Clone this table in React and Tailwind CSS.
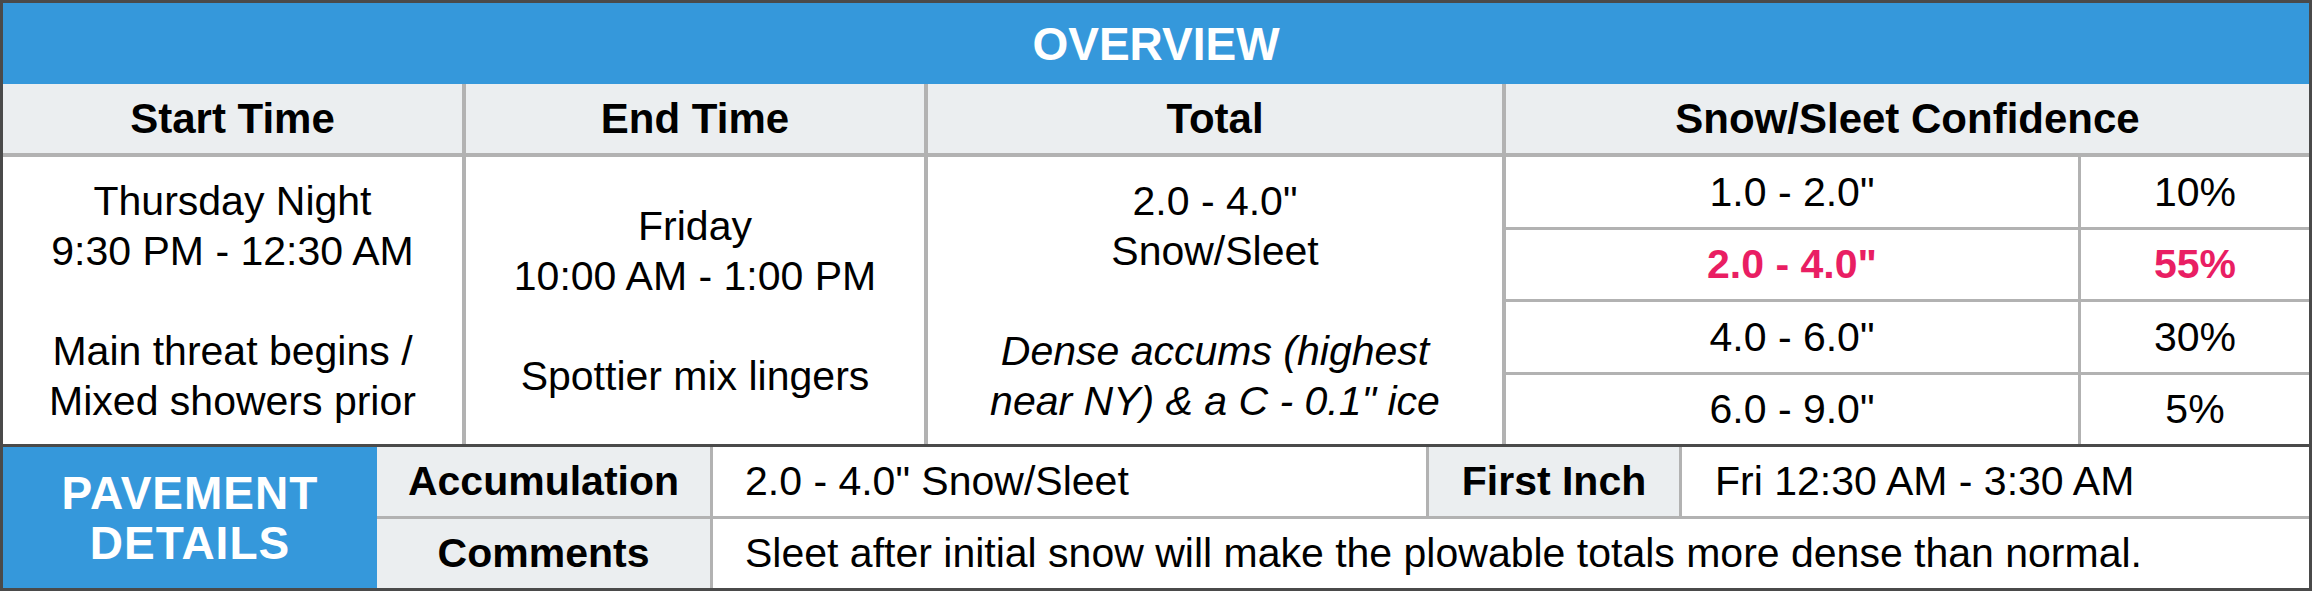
const confidence = [
  { range: '1.0 - 2.0"', pct: "10%" },
  { range: '2.0 - 4.0"', pct: "55%", likely: true },
  { range: '4.0 - 6.0"', pct: "30%" },
  { range: '6.0 - 9.0"', pct: "5%" },
];

const headers = ["Start Time", "End Time", "Total", "Snow/Sleet Confidence"];

export default function App() {
  return (
    <div className="w-[2312px] h-[591px] bg-white border-[3px] border-[#4a4a4a] flex flex-col font-['Liberation_Sans',Arial,sans-serif] text-black text-[41px]">
      {/* overview banner */}
      <div className="h-[81px] shrink-0 bg-[#3598db] flex items-center justify-center">
        <h1 className="text-white font-bold text-[46px] leading-none">OVERVIEW</h1>
      </div>

      {/* column headers */}
      <div className="h-[73px] shrink-0 grid grid-cols-[463px_462px_578px_1fr] bg-[#ebeef0] border-b-4 border-[#b2b2b2] text-[42px]">
        {headers.map((h, i) => (
          <div
            key={h}
            className={`flex items-center justify-center font-bold ${i < 3 ? "border-r-4 border-[#b2b2b2]" : ""}`}
          >
            {h}
          </div>
        ))}
      </div>

      {/* body */}
      <div className="h-[287px] shrink-0 grid grid-cols-[463px_462px_578px_1fr] leading-[50px]">
        <div className="flex items-center justify-center text-center border-r-4 border-[#b2b2b2]">
          <p>
            Thursday Night
            <br />
            9:30 PM - 12:30 AM
            <br />
            <br />
            Main threat begins /
            <br />
            Mixed showers prior
          </p>
        </div>
        <div className="flex items-center justify-center text-center border-r-4 border-[#b2b2b2]">
          <p>
            Friday
            <br />
            10:00 AM - 1:00 PM
            <br />
            <br />
            Spottier mix lingers
          </p>
        </div>
        <div className="flex items-center justify-center text-center border-r-4 border-[#b2b2b2]">
          <p>
            2.0 - 4.0"
            <br />
            Snow/Sleet
            <br />
            <br />
            <em>
              Dense accums (highest
              <br />
              near NY) &amp; a C - 0.1" ice
            </em>
          </p>
        </div>
        <div className="flex flex-col">
          {confidence.map((c, i) => (
            <div
              key={c.range}
              className={`flex-1 grid grid-cols-[575px_1fr] ${i < 3 ? "border-b-[3px] border-[#b2b2b2]" : ""} ${c.likely ? "text-[#e91e63] font-bold" : ""}`}
            >
              <div className="flex items-center justify-center border-r-[3px] border-[#b2b2b2]">{c.range}</div>
              <div className="flex items-center justify-center">{c.pct}</div>
            </div>
          ))}
        </div>
      </div>

      {/* pavement details */}
      <div className="flex-1 flex border-t-[3px] border-[#4a4a4a]">
        <div className="w-[374px] shrink-0 bg-[#3598db] flex items-center justify-center text-center text-white font-bold text-[46px] leading-[50px] tracking-[1px]">
          <p>
            PAVEMENT
            <br />
            DETAILS
          </p>
        </div>
        <div className="flex-1 flex flex-col">
          <div className="flex-1 grid grid-cols-[336px_716px_253px_1fr] border-b-[3px] border-[#b2b2b2]">
            <div className="bg-[#ebeef0] font-bold flex items-center justify-center border-r-[3px] border-[#b2b2b2]">
              Accumulation
            </div>
            <div className="flex items-center pl-[32px] border-r-[3px] border-[#b2b2b2]">2.0 - 4.0" Snow/Sleet</div>
            <div className="bg-[#ebeef0] font-bold flex items-center justify-center border-r-[3px] border-[#b2b2b2]">
              First Inch
            </div>
            <div className="flex items-center pl-[33px]">Fri 12:30 AM - 3:30 AM</div>
          </div>
          <div className="flex-1 grid grid-cols-[336px_1fr]">
            <div className="bg-[#ebeef0] font-bold flex items-center justify-center border-r-[3px] border-[#b2b2b2]">
              Comments
            </div>
            <div className="flex items-center pl-[32px]">
              Sleet after initial snow will make the plowable totals more dense than normal.
            </div>
          </div>
        </div>
      </div>
    </div>
  );
}
